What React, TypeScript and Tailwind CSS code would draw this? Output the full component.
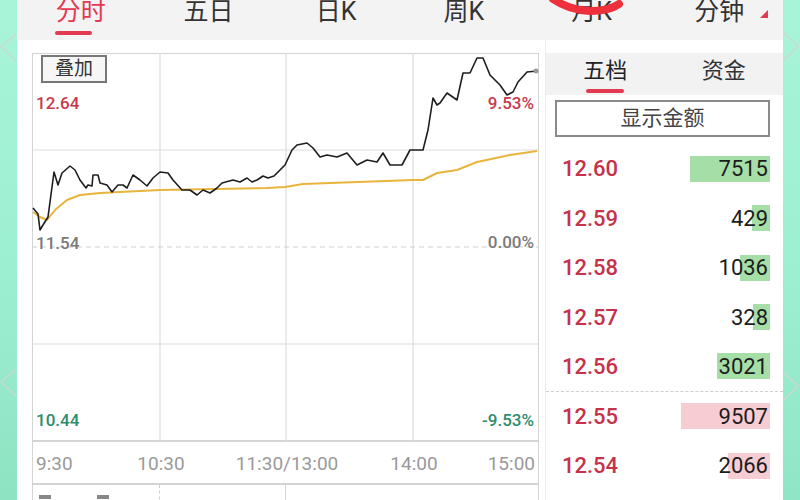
const FONT = { fontFamily: "Roboto, 'Noto Sans CJK SC', sans-serif" };

const tabs = ["分时", "五日", "日K", "周K", "月K", "分钟"];

const pricePts =
  "33,208 38,214 40,230 43,225 48,217 54,172 58,185 62,173 70,166 75,170 80,180 86,188 88,185 92,186 93,175 98,175 100,183 107,185 112,192 118,185 123,185 127,188 133,175 140,180 147,186 153,178 160,172 168,173 173,180 182,190 190,190 197,195 203,190 210,193 217,188 222,183 233,180 240,182 247,178 252,182 257,180 263,176 268,178 274,176 280,170 285,165 292,150 297,145 307,143 313,148 320,157 327,155 337,157 347,153 357,165 367,160 377,162 383,153 390,165 402,165 410,150 417,150 423,150 428,130 433,98 437,105 440,103 447,93 457,100 463,73 470,73 477,58 483,58 490,75 500,85 507,95 513,92 518,82 527,72 537,71";

const avgPts =
  "33,212 40,217 47,220 55,210 67,200 80,195 100,193 160,190 267,188 285,187 303,184 413,180 423,180 437,173 457,170 477,162 510,155 537,151";

const orders = [
  { p: "12.60", v: "7515", w: 80, c: "bg-[#a6dea8]" },
  { p: "12.59", v: "429", w: 18, c: "bg-[#a6dea8]" },
  { p: "12.58", v: "1036", w: 30, c: "bg-[#a6dea8]" },
  { p: "12.57", v: "328", w: 17, c: "bg-[#a6dea8]" },
  { p: "12.56", v: "3021", w: 53, c: "bg-[#a6dea8]" },
  { p: "12.55", v: "9507", w: 89, c: "bg-[#f7ccd2]" },
  { p: "12.54", v: "2066", w: 42, c: "bg-[#f7ccd2]" },
];

const Chevron = ({ dir, top }: { dir: "l" | "r"; top: number }) => (
  <svg
    className="absolute left-0"
    style={{ top }}
    width="17"
    height="30"
    viewBox="0 0 17 30"
  >
    <polyline
      points={dir === "l" ? "16,1 1,14 16,28" : "1,1 15,14 1,28"}
      fill="none"
      stroke="#c9d9d2"
      strokeWidth="1.5"
    />
  </svg>
);

const App = () => {
  return (
    <div className="flex w-[800px] h-[500px] overflow-hidden bg-white" style={FONT}>
      <div className="relative w-[17px] bg-gradient-to-b from-[#a8f4d9] via-[#9ef0d2] to-[#8ee3c3]">
        <Chevron dir="l" top={33} />
        <Chevron dir="l" top={368} />
      </div>

      <div className="flex flex-col w-[766px] h-[500px] overflow-hidden">
        {/* top tabs */}
        <div className="relative shrink-0 flex h-[40px] bg-[#f3f3f3]">
          {tabs.map((t, i) => (
            <div key={t} className="relative flex-1 flex flex-col items-center">
              <span
                className={`-mt-[2px] text-[25px] leading-[28px] ${
                  i === 0 ? "text-[#e23a50]" : "text-[#333]"
                }`}
              >
                {t}
              </span>
              {i === 0 && <div className="mt-[5px] ml-[-14px] w-[37px] h-[4px] rounded-full bg-[#e23a50]" />}
            </div>
          ))}
          <svg className="absolute left-[743px] top-[10px]" width="9" height="9" viewBox="0 0 9 9">
            <polygon points="8,0 8,8 0,8" fill="#e23a50" />
          </svg>
          <svg className="absolute left-[518px] top-0" width="90" height="18" viewBox="0 0 90 18">
            <path d="M18 -1 Q34 10 55 11 Q74 11 84 4" fill="none" stroke="#ee2f3c" strokeWidth="8" strokeLinecap="round" />
          </svg>
        </div>

        <div className="flex flex-1 min-h-0">
          {/* chart column */}
          <div className="w-[528px] pl-[15px] pt-[13px]">
            <div className="relative w-[507px] h-[389px] border border-b-2 border-[#d4d4d4]">
              <svg className="absolute -left-px -top-px" width="507" height="390" viewBox="32 53 507 390">
                <g stroke="#dcdcdc" strokeWidth="1.2">
                  <line x1="32" y1="150" x2="538" y2="150" />
                  <line x1="32" y1="344" x2="538" y2="344" />
                  <line x1="160" y1="53" x2="160" y2="442" />
                  <line x1="286" y1="53" x2="286" y2="442" />
                  <line x1="413" y1="53" x2="413" y2="442" />
                </g>
                <line x1="32" y1="247" x2="538" y2="247" stroke="#cfcfcf" strokeWidth="1.2" strokeDasharray="5 4" />
                <polyline points={avgPts} fill="none" stroke="#e9b43c" strokeWidth="2" strokeLinejoin="round" />
                <polyline points={pricePts} fill="none" stroke="#1e1e1e" strokeWidth="1.6" strokeLinejoin="round" />
                <circle cx="536" cy="71" r="2.5" fill="#999" />
              </svg>

              <div className="absolute left-[8px] top-[1px] w-[66px] h-[28px] flex items-center justify-center border-2 border-[#777] bg-[#f6f6f6] text-[19px] text-[#333]">
                叠加
              </div>
              <span className="absolute left-[3px] top-[37px] text-[17px] font-medium text-[#c73a4e]">12.64</span>
              <span className="absolute right-[4px] top-[37px] text-[17px] font-medium text-[#c73a4e]">9.53%</span>
              <span className="absolute left-[3px] top-[177px] text-[17px] font-medium text-[#7a7a7a]">11.54</span>
              <span className="absolute right-[4px] top-[176px] text-[17px] font-medium text-[#7a7a7a]">0.00%</span>
              <span className="absolute left-[3px] top-[354px] text-[17px] font-medium text-[#2f8c6f]">10.44</span>
              <span className="absolute right-[4px] top-[354px] text-[17px] font-medium text-[#2f8c6f]">-9.53%</span>
            </div>

            <div className="relative w-[507px] h-[43px] border-x border-b-2 border-[#d4d4d4] text-[19px] text-[#9a9a9a]">
              <span className="absolute left-[3px] top-[8px]">9:30</span>
              <span className="absolute left-[128px] top-[8px] -translate-x-1/2">10:30</span>
              <span className="absolute left-[254px] top-[8px] -translate-x-1/2">11:30/13:00</span>
              <span className="absolute left-[381px] top-[8px] -translate-x-1/2">14:00</span>
              <span className="absolute right-[3px] top-[8px]">15:00</span>
            </div>

            <div className="flex w-[507px] h-[20px] border-x border-[#d4d4d4]">
              <div className="w-[127px] border-r border-dashed border-[#cfcfcf] pl-[6px] pt-[10px] flex gap-[46px]">
                <div className="w-[12px] h-[4px] bg-[#888]" />
                <div className="w-[12px] h-[4px] bg-[#888]" />
              </div>
              <div className="w-[126px] border-r border-[#d4d4d4]" />
              <div className="flex-1" />
            </div>
          </div>

          {/* order book */}
          <div className="flex-1 flex flex-col pt-[13px] border-l border-[#ececec]">
            <div className="relative flex h-[42px] bg-[#f2f2f2] text-[22px]">
              <div className="flex-1 flex flex-col items-center pt-[4px] text-[#222]">
                <span className="leading-[28px]">五档</span>
                <div className="mt-[4px] w-[38px] h-[4px] rounded-full bg-[#e23a50]" />
              </div>
              <div className="flex-1 flex justify-center pt-[4px] text-[#333]">
                <span className="leading-[28px]">资金</span>
              </div>
            </div>
            <div className="ml-[9px] mr-[13px] mt-[5px] h-[37px] flex items-center justify-center border-2 border-[#8a8a8a] text-[21px] text-[#444]">
              显示金额
            </div>
            <div className="mt-[7px] flex flex-col">
              {orders.map((o, i) => (
                <div
                  key={o.p}
                  className={`flex items-center justify-between pl-[16px] pr-[13px] h-[49.5px] ${
                    i === 4 ? "border-b border-dashed border-[#cfcfcf]" : ""
                  }`}
                >
                  <span className="text-[22px] font-medium text-[#c4334a]">{o.p}</span>
                  <div className="relative flex items-center justify-end">
                    <div className={`absolute right-0 h-[26px] ${o.c}`} style={{ width: o.w }} />
                    <span className="relative pr-[2px] text-[22px] text-[#1c1c1c]">{o.v}</span>
                  </div>
                </div>
              ))}
            </div>
          </div>
        </div>
      </div>

      <div className="relative w-[17px] bg-gradient-to-b from-[#a8f4d9] via-[#9ef0d2] to-[#8fe6c6]">
        <Chevron dir="r" top={32} />
        <Chevron dir="r" top={372} />
      </div>
    </div>
  );
};

export default App;
